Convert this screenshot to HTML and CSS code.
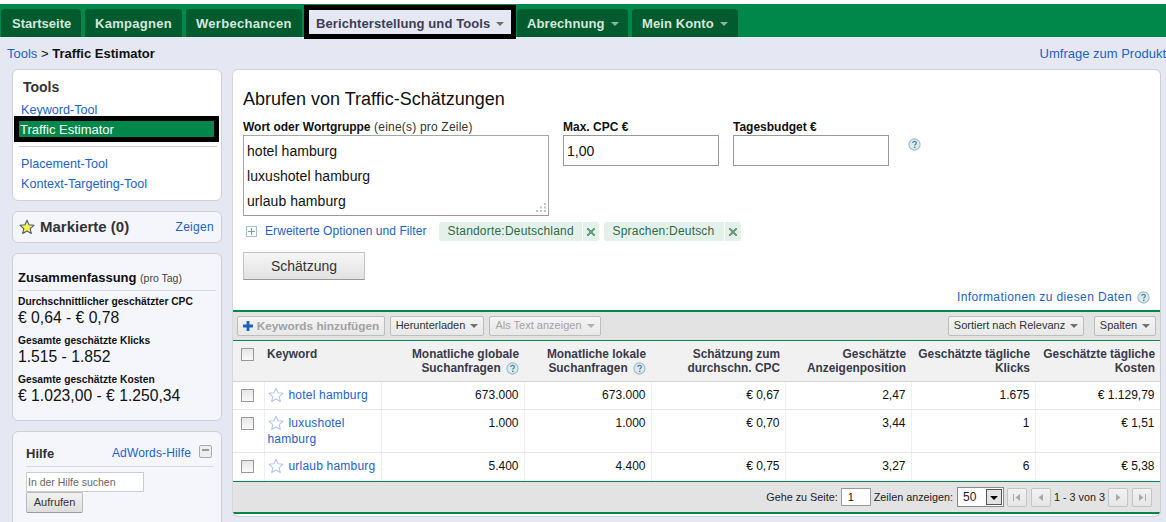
FILE: index.html
```html
<!DOCTYPE html>
<html lang="de">
<head>
<meta charset="utf-8">
<title>Traffic Estimator</title>
<link rel="stylesheet" href="styles.css">
</head>
<body>
<svg class="defs" width="0" height="0" aria-hidden="true">
  <symbol id="help" viewBox="0 0 14 14"><circle cx="7" cy="7" r="6" fill="#dceaf0" stroke="#9dbcc8" stroke-width="1.2"/><path d="M5 5.4C5.2 4.2 6 3.700 7 3.700c1.200 0 2 .7 2 1.700 0 1.400-1.700 1.400-1.700 2.800" fill="none" stroke="#4f8296" stroke-width="1.300"/><rect x="6.500" y="9.300" width="1.600" height="1.500" fill="#4f8296"/></symbol>
  <symbol id="star" viewBox="0 0 16 16"><path d="M8 1.200l2 4.600 5 .5-3.800 3.300 1.100 4.900L8 12l-4.300 2.500 1.100-4.900L1 6.300l5-.5z" fill="#fff" stroke="#b3c6ee" stroke-width="1.100" stroke-linejoin="round"/></symbol>
  <symbol id="star-on" viewBox="0 0 16 16"><path d="M8 1.200l2 4.600 5 .5-3.800 3.300 1.100 4.900L8 12l-4.300 2.500 1.100-4.900L1 6.300l5-.5z" fill="#f7ee5a" stroke="#4a5a78" stroke-width="1.100" stroke-linejoin="round"/></symbol>
</svg>

<nav class="tabs">
  <a class="tab">Startseite</a>
  <a class="tab">Kampagnen</a>
  <a class="tab">Werbechancen</a>
  <a class="tab tab-current">Berichterstellung und Tools <i class="caret"></i></a>
  <a class="tab">Abrechnung <i class="caret caret-tab"></i></a>
  <a class="tab">Mein Konto <i class="caret caret-tab"></i></a>
</nav>

<div class="crumbs">
  <div><a class="link">Tools</a> &gt; <b>Traffic Estimator</b></div>
  <a class="link">Umfrage zum Produkt</a>
</div>

<div class="layout">
  <aside class="side">
    <section class="card card-tools">
      <h3 class="tools-title">Tools</h3>
      <a class="link tool-link">Keyword-Tool</a>
      <a class="tool-current">Traffic Estimator</a>
      <hr class="rule">
      <a class="link tool-link">Placement-Tool</a>
      <a class="link tool-link">Kontext-Targeting-Tool</a>
    </section>

    <section class="card card-tint card-marked">
      <svg class="star-big"><use href="#star-on"/></svg>
      <b class="marked-title">Markierte (0)</b>
      <a class="link marked-show">Zeigen</a>
    </section>

    <section class="card card-tint card-summary">
      <h3 class="summary-title">Zusammenfassung <small>(pro Tag)</small></h3>
      <div class="metric"><b>Durchschnittlicher geschätzter CPC</b><span>€ 0,64 - € 0,78</span></div>
      <div class="metric"><b>Gesamte geschätzte Klicks</b><span>1.515 - 1.852</span></div>
      <div class="metric"><b>Gesamte geschätzte Kosten</b><span>€ 1.023,00 - € 1.250,34</span></div>
    </section>

    <section class="card card-tint card-help">
      <div class="help-head">
        <b class="help-title">Hilfe</b>
        <a class="link help-link">AdWords-Hilfe</a>
        <i class="collapse"></i>
      </div>
      <div class="help-search">In der Hilfe suchen</div>
      <div class="help-btn">Aufrufen</div>
    </section>
  </aside>

  <main class="panel">
    <h1 class="title">Abrufen von Traffic-Schätzungen</h1>
    <div class="form-row">
      <label class="field field-words"><span class="label"><b>Wort oder Wortgruppe</b> (eine(s) pro Zeile)</span>
        <span class="words-wrap">
          <textarea class="words" spellcheck="false">hotel hamburg
luxushotel hamburg
urlaub hamburg</textarea>
          <svg class="grip" viewBox="0 0 11 9"><path d="M9 0h2v2H9zM5 3.500h2v2H5zM9 3.500h2v2H9zM1 7h2v2H1zM5 7h2v2H5zM9 7h2v2H9z" fill="#c4c4c4"/></svg>
        </span></label>
      <label class="field field-num"><span class="label"><b>Max. CPC €</b></span><input class="num" value="1,00"></label>
      <label class="field field-num"><span class="label"><b>Tagesbudget €</b></span><input class="num"></label>
      <svg class="help-ico form-help"><use href="#help"/></svg>
    </div>
    <div class="options">
      <i class="expander"></i>
      <a class="link options-link">Erweiterte Optionen und Filter</a>
      <span class="chip chip-loc">Standorte:Deutschland<i class="chip-x"></i></span>
      <span class="chip chip-lang">Sprachen:Deutsch<i class="chip-x"></i></span>
    </div>
    <div class="estimate">Schätzung</div>
    <div class="info"><a class="link">Informationen zu diesen Daten</a><svg class="help-ico"><use href="#help"/></svg></div>

    <div class="toolbar">
      <span class="btn btn-add"><svg class="plus" viewBox="0 0 10 10"><path d="M3.600 0h2.800v3.600H10v2.800H6.400V10H3.600V6.400H0V3.600h3.600z" fill="#1c62b9"/></svg><b>Keywords hinzufügen</b></span>
      <span class="btn btn-dl">Herunterladen <i class="caret"></i></span>
      <span class="btn btn-off">Als Text anzeigen <i class="caret caret-off"></i></span>
      <span class="spacer"></span>
      <span class="btn btn-sort">Sortiert nach Relevanz <i class="caret"></i></span>
      <span class="btn btn-cols">Spalten <i class="caret"></i></span>
    </div>

    <table class="grid">
      <colgroup>
        <col class="c1"><col class="c2"><col class="c3"><col class="c4"><col class="c5"><col class="c6"><col class="c7"><col class="c8">
      </colgroup>
      <thead>
        <tr>
          <th class="chk"><i class="box"></i></th>
          <th class="kw">Keyword</th>
          <th>Monatliche globale<br>Suchanfragen <svg class="help-ico th-help"><use href="#help"/></svg></th>
          <th>Monatliche lokale<br>Suchanfragen <svg class="help-ico th-help"><use href="#help"/></svg></th>
          <th>Schätzung zum<br>durchschn. CPC</th>
          <th>Geschätzte<br>Anzeigenposition</th>
          <th>Geschätzte tägliche<br>Klicks</th>
          <th>Geschätzte tägliche<br>Kosten</th>
        </tr>
      </thead>
      <tbody>
        <tr class="row-a">
          <td class="chk"><i class="box"></i></td>
          <td class="kw"><svg class="star"><use href="#star"/></svg><a class="link">hotel hamburg</a></td>
          <td>673.000</td><td>673.000</td><td>€ 0,67</td><td>2,47</td><td>1.675</td><td>€ 1.129,79</td>
        </tr>
        <tr class="row-b">
          <td class="chk"><i class="box"></i></td>
          <td class="kw"><svg class="star"><use href="#star"/></svg><a class="link">luxushotel hamburg</a></td>
          <td>1.000</td><td>1.000</td><td>€ 0,70</td><td>3,44</td><td>1</td><td>€ 1,51</td>
        </tr>
        <tr class="row-c">
          <td class="chk"><i class="box"></i></td>
          <td class="kw"><svg class="star"><use href="#star"/></svg><a class="link">urlaub hamburg</a></td>
          <td>5.400</td><td>4.400</td><td>€ 0,75</td><td>3,27</td><td>6</td><td>€ 5,38</td>
        </tr>
      </tbody>
    </table>

    <div class="pager">
      <span class="page-label">Gehe zu Seite:</span>
      <span class="page-input">1</span>
      <span>Zeilen anzeigen:</span>
      <span class="page-select">50<i class="select-arrow"></i></span>
      <span class="page-btn"><svg viewBox="0 0 9 9"><path d="M1 1h1v7H1zM8 1v7L3.500 4.500z" fill="#a9a9a9"/></svg></span>
      <span class="page-btn"><svg viewBox="0 0 9 9"><path d="M7 1v7L2.500 4.500z" fill="#a9a9a9"/></svg></span>
      <span class="page-count">1 - 3 von 3</span>
      <span class="page-btn"><svg viewBox="0 0 9 9"><path d="M2 1v7l4.500-3.500z" fill="#a9a9a9"/></svg></span>
      <span class="page-btn"><svg viewBox="0 0 9 9"><path d="M1 1v7l4.500-3.500zM7 1h1v7H7z" fill="#a9a9a9"/></svg></span>
    </div>
  </main>
</div>
</body>
</html>
```
FILE: styles.css
```css
html { margin: 0; height: 522px; overflow: hidden; background: #fff; }
body { margin: 0; height: 522px; overflow: hidden; box-sizing: border-box; border-top: 4px solid #fff; background: #e5e8f2; font: 12px/1.2 "Liberation Sans", Arial, sans-serif; color: #111; }
.defs { position: absolute; }
.link { color: #1c62c9; text-decoration: none; }
i { display: inline-block; font-style: normal; }

/* top tabs */
.tabs { display: flex; align-items: flex-end; height: 33px; padding-left: 1px; background: #00884a; }
.tab { display: flex; align-items: center; gap: 5px; box-sizing: border-box; height: 28px; padding: 2px 10px 0; margin-right: 4px; background: #005c2f; color: #d7e6dc; font-weight: bold; font-size: 13px; letter-spacing: .1px; border-radius: 4px 4px 0 0; white-space: nowrap; }
.tab:nth-child(1) { width: 80px; padding-left: 11px; letter-spacing: 0; }
.tab:nth-child(2) { width: 97px; letter-spacing: .3px; }
.tab:nth-child(3) { width: 116px; margin-right: 2px; letter-spacing: .3px; }
.tab:nth-child(5) { width: 111px; }
.tab:nth-child(6) { width: 106px; }
.tab-current { height: 34px; width: 212px; margin: 0 1px -2px 0; padding: 4px 0 0 7px; border: 5px solid #000; border-radius: 0; background: #e5e8f2; color: #3d3d56; position: relative; z-index: 1; }
.caret { width: 0; height: 0; border: 4px solid transparent; border-top: 4px solid #707070; border-bottom: 0; margin-left: 1px; }
.caret-tab { border-top-color: #8fb3a0; }
.caret-off { border-top-color: #b0b0b0; }

.crumbs { display: flex; justify-content: space-between; align-items: center; height: 32px; padding: 1px 0 0 7px; font-size: 13px; box-sizing: border-box; }
.crumbs b { color: #111; }

.layout { display: flex; gap: 10px; padding-left: 12px; align-items: flex-start; height: 453px; overflow: hidden; }

/* sidebar */
.side { width: 210px; display: flex; flex-direction: column; gap: 10px; flex: none; }
.card { box-sizing: border-box; border: 1px solid #cfcfd4; border-radius: 6px; background: #fff; }
.card-tint { background: #f4f6fb; }
.card-tools { height: 132px; padding: 10px 4px 0 1px; display: flex; flex-direction: column; }
.tools-title { margin: 0 0 5px 9px; font-size: 14px; color: #333; line-height: 15px; }
.tool-link { font-size: 12.6px; line-height: 20px; margin-left: 7px; }
.tool-current { box-sizing: border-box; height: 26px; width: 205px; border: 5px solid #000; background: #00884a; color: #fff; font-size: 13px; line-height: 17px; padding-left: 1px; margin-top: -4px; }
.rule { border: 0; border-top: 1px solid #ccc; margin: 4px 1px 7px 5px; width: 198px; }
.card-marked { height: 32px; display: flex; align-items: center; padding: 0 7px 0 6px; }
.star-big { width: 16px; height: 16px; margin-right: 5px; flex: none; }
.marked-title { font-size: 15px; color: #333; flex: 1; }
.marked-show { font-size: 12px; letter-spacing: .3px; }
.card-summary { height: 168px; padding: 14px 5px 0 5px; }
.summary-title { margin: 0 0 4px; padding-bottom: 2px; font-size: 13px; line-height: 19px; border-bottom: 1px solid #d8d8de; color: #111; white-space: nowrap; }
.summary-title small { font-weight: normal; font-size: 10.5px; color: #444; }
.metric { margin-bottom: 7px; }
.metric b { display: block; font-size: 10.25px; line-height: 14px; white-space: nowrap; }
.metric span { display: block; font-size: 15.7px; line-height: 19px; margin-top: -1px; }
.card-help { height: 120px; padding: 13px 8px 0 13px; }
.help-head { display: flex; align-items: center; height: 17px; border-bottom: 1px solid #d8d8de; padding-bottom: 4px; }
.help-title { font-size: 13px; color: #333; flex: 1; }
.help-link { font-size: 12px; letter-spacing: .15px; margin-right: 8px; }
.collapse { width: 11px; height: 11px; border: 1px solid #aaa; border-radius: 2px; background: linear-gradient(#999, #999) center 3px / 7px 2px no-repeat, #eee; margin-top: -4px; margin-right: 1px; }
.help-search { box-sizing: border-box; width: 118px; height: 20px; margin-top: 5px; border: 1px solid #ccc; background: #fff; color: #666; font-size: 10.5px; line-height: 18px; padding-left: 1px; }
.help-btn { box-sizing: border-box; width: 57px; height: 21px; border: 1px solid #bbb; border-bottom-color: #999; border-radius: 2px; background: linear-gradient(#f2f2f2, #dedede); color: #333; font-size: 11px; line-height: 18px; text-align: center; }

/* main panel */
.panel { box-sizing: border-box; width: 929px; height: 448px; border: 1px solid #cfcfd4; border-left-color: #d8d8dc; border-radius: 6px; background: #fff; flex: none; overflow: hidden; }
.title { margin: 19px 0 0 10px; font-size: 18px; line-height: 20px; font-weight: normal; color: #111; }
.form-row { display: flex; margin: 11px 0 0 10px; height: 96px; }
.field { display: flex; flex-direction: column; }
.field-words { width: 320px; }
.field-num { width: 170px; }
.label { font-size: 12px; line-height: 14px; height: 15px; color: #333; white-space: nowrap; letter-spacing: .2px; }
.label b { color: #111; letter-spacing: 0; }
.words-wrap { position: relative; display: block; width: 306px; height: 81px; }
.words { display: block; box-sizing: border-box; width: 306px; height: 81px; margin: 0; border: 1px solid #a8a8a8; border-bottom-color: #999; padding: 3px 3px; font: 14px/25px "Liberation Sans", Arial, sans-serif; letter-spacing: .05px; color: #111; outline: 0; overflow: hidden; resize: none; }
.grip { position: absolute; right: 3px; bottom: 4px; width: 11px; height: 9px; }
.num { box-sizing: border-box; width: 156px; height: 31px; margin: 0; border: 1px solid #999; padding: 0 3px; font: 14px "Liberation Sans", Arial, sans-serif; color: #111; outline: 0; }
.help-ico { width: 13px; height: 13px; flex: none; }
.form-help { margin: 18px 0 0 5px; }
.options { display: flex; align-items: center; height: 19px; margin: 6px 0 0 13px; font-size: 12px; }
.expander { box-sizing: border-box; width: 11px; height: 11px; border: 1px solid #a8c0cc; background: linear-gradient(#7a9cac, #7a9cac) center / 7px 1px no-repeat, linear-gradient(#7a9cac, #7a9cac) center / 1px 7px no-repeat; margin-right: 8px; }
.options-link { margin-right: 12px; letter-spacing: .07px; }
.chip { display: flex; align-items: center; box-sizing: border-box; height: 19px; background: #e4f1ea; color: #2f6a4a; padding-left: 9px; border-radius: 3px; margin-right: 5px; white-space: nowrap; letter-spacing: .2px; }
.chip-x { box-sizing: content-box; width: 8px; height: 19px; padding-left: 4px; margin: 0 4px 0 auto; border-left: 1px solid #fff; background-origin: content-box; background-repeat: no-repeat; background-position: center; background-size: 8px 8px; background-image: linear-gradient(45deg, transparent 38%, #6a9d82 38%, #6a9d82 62%, transparent 62%), linear-gradient(-45deg, transparent 38%, #6a9d82 38%, #6a9d82 62%, transparent 62%); }
.chip-loc { width: 160px; }
.chip-lang { width: 137px; }
.estimate { box-sizing: border-box; width: 122px; height: 28px; margin: 11px 0 0 10px; border: 1px solid #c4c4c4; border-bottom-color: #999; background: linear-gradient(#f6f6f6, #e2e2e2); color: #333; text-align: center; font-size: 14px; line-height: 27px; }
.info { display: flex; justify-content: flex-end; align-items: center; gap: 5px; height: 18px; margin-top: 8px; padding-right: 10px; font-size: 12px; letter-spacing: .4px; }

.toolbar { display: flex; align-items: center; gap: 5px; box-sizing: border-box; height: 31px; margin-top: 4px; padding: 0 4px; background: #e3e3e3; border-top: 2px solid #00884a; border-bottom: 1px solid #00884a; }
.spacer { flex: 1; }
.btn { display: flex; align-items: center; justify-content: center; gap: 4px; box-sizing: border-box; height: 20px; border: 1px solid #bdbdbd; border-radius: 2px; background: linear-gradient(#f4f4f4, #e8e8e8); color: #333; font-size: 11px; white-space: nowrap; }
.btn-add { width: 148px; color: #a2a2a2; font-size: 11.8px; }
.plus { width: 10px; height: 10px; }
.btn-dl { width: 94px; }
.btn-off { width: 112px; color: #a2a2a2; }
.btn-sort { width: 136px; margin-right: 5px; }
.btn-cols { width: 62px; }

.grid { width: 927px; border-collapse: collapse; table-layout: fixed; font-size: 12px; }
.c1 { width: 31px; } .c2 { width: 117px; } .c3 { width: 143px; } .c4 { width: 127px; }
.c5 { width: 134px; } .c6 { width: 126px; } .c7 { width: 124px; } .c8 { width: 125px; }
.grid th { height: 40px; padding: 6px 5px 0 4px; background: #f1f1f1; border-bottom: 1px solid #d4d4d4; text-align: right; vertical-align: top; font-size: 11.9px; line-height: 14px; color: #3a3a4a; box-sizing: border-box; white-space: nowrap; }
.grid td { padding: 5px 5px 0 4px; text-align: right; vertical-align: top; border-right: 1px solid #efefef; border-bottom: 1px solid #e8e8e8; line-height: 16px; box-sizing: border-box; color: #111; }
.grid th.kw, .grid td.kw { text-align: left; padding-left: 3px; }
.grid th.chk { padding: 7px 0 0 8px; }
.grid td.chk { text-align: left; padding: 7px 0 0 8px; }
.row-a td { height: 28px; }
.row-b td { height: 43px; }
.row-c td { height: 29px; border-bottom: 0; }
.box { display: block; box-sizing: border-box; width: 13px; height: 13px; border: 1px solid #999; background: linear-gradient(#e6e6e6, #fafafa); }
.star { width: 16px; height: 16px; vertical-align: -4px; margin-right: 5px; }
.th-help { vertical-align: -3px; margin-left: 2px; }
.grid td.kw .link { letter-spacing: .2px; }

.pager { display: flex; justify-content: flex-end; align-items: center; gap: 4px; box-sizing: border-box; height: 33px; padding: 0 8px 0 0; background: #e3e3e3; border-top: 1px solid #00884a; border-bottom: 2px solid #00884a; font-size: 10.8px; color: #222; }
.page-input { box-sizing: border-box; width: 30px; height: 18px; margin: 0 -1px; border: 1px solid #999; background: #fff; font-size: 11px; line-height: 16px; padding-left: 6px; }
.page-select { position: relative; box-sizing: border-box; width: 47px; height: 20px; margin-right: -1px; border: 1px solid #888; background: #fff; line-height: 18px; padding-left: 5px; font-size: 12px; }
.select-arrow { position: absolute; right: 1px; top: 1px; box-sizing: border-box; width: 16px; height: 16px; border: 1px solid #555; background: #e3e3e3; }
.select-arrow::after { content: ""; position: absolute; left: 3px; top: 6px; border: 4px solid transparent; border-top: 4px solid #000; border-bottom: 0; }
.page-btn { display: flex; align-items: center; justify-content: center; box-sizing: border-box; width: 20px; height: 19px; border: 1px solid #c4c4c4; border-radius: 2px; background: linear-gradient(#f2f2f2, #e6e6e6); }
.page-btn svg { width: 9px; height: 9px; }
.page-count { margin: 0 -1px; }
```
